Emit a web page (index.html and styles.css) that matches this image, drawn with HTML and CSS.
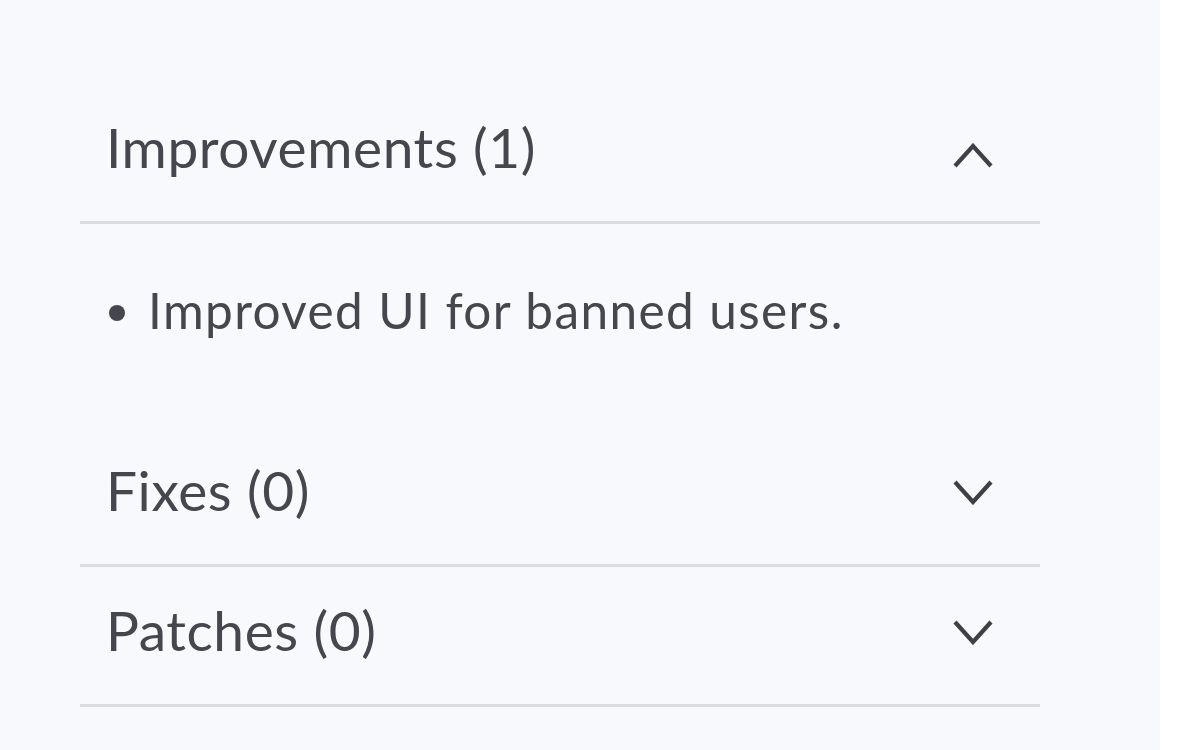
FILE: index.html
```html
<!DOCTYPE html>
<html lang="en">
<head>
<meta charset="utf-8">
<title>Release notes</title>
<link rel="stylesheet" href="styles.css">
</head>
<body>
<div class="panel">
  <div class="list">
    <div class="row">
      <span class="title">Improvements (1)</span>
      <svg class="chev chev-up" width="40" height="26" viewBox="0 0 40 26" aria-hidden="true"><polyline points="2,23 20,3 38,23"/></svg>
    </div>
    <div class="content">
      <ul class="notes">
        <li>Improved UI for banned users.</li>
      </ul>
    </div>
    <div class="row">
      <span class="title">Fixes (0)</span>
      <svg class="chev chev-down" width="40" height="26" viewBox="0 0 40 26" aria-hidden="true"><polyline points="2,3 20,23 38,3"/></svg>
    </div>
    <div class="row">
      <span class="title">Patches (0)</span>
      <svg class="chev chev-down" width="40" height="26" viewBox="0 0 40 26" aria-hidden="true"><polyline points="2,3 20,23 38,3"/></svg>
    </div>
  </div>
</div>
</body>
</html>
```
FILE: styles.css
```css
html, body {
  margin: 0;
  padding: 0;
  background: #ffffff;
}
body {
  font-family: Lato, "Noto Sans", sans-serif;
  color: #45464e;
}
.panel {
  width: 1160px;
  height: 750px;
  background: #f8f9fc;
  box-sizing: border-box;
  padding: 84px 0 0 80px;
}
.list {
  width: 960px;
}
.row {
  display: flex;
  align-items: flex-start;
  height: 137px;
  border-bottom: 3px solid #dcdde1;
  box-sizing: content-box;
  padding-left: 26px;
}
.title {
  font-size: 55px;
  line-height: 66px;
  letter-spacing: 0.6px;
  margin-top: 30px;
  white-space: nowrap;
}
.chev {
  margin-left: auto;
  margin-right: 47px;
  fill: none;
  stroke: #3f4047;
  stroke-width: 4.2;
}
.chev-up {
  margin-top: 59px;
}
.chev-down {
  margin-top: 52px;
}
.content {
  height: 203px;
  box-sizing: border-box;
  padding-top: 57px;
}
.notes {
  list-style: none;
  margin: 0;
  padding: 0 0 0 29px;
}
.notes li {
  display: flex;
  align-items: center;
  font-size: 49.5px;
  line-height: 59px;
  letter-spacing: 1.4px;
}
.notes li::before {
  content: "";
  width: 16px;
  height: 16px;
  border-radius: 50%;
  background: #45464e;
  margin-right: 23px;
  margin-top: 4px;
  flex: none;
}
```
